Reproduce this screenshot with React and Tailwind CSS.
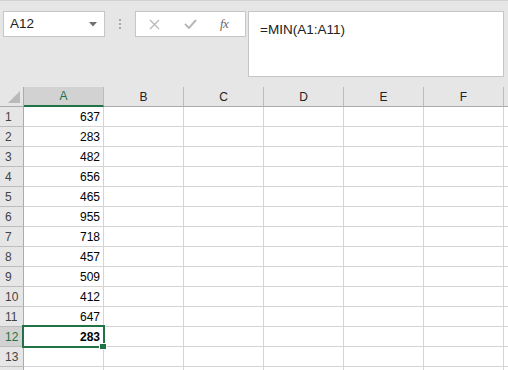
import React from 'react'

const VALUES = [637, 283, 482, 656, 465, 955, 718, 457, 509, 412, 647, 283]
const COLS = ['A', 'B', 'C', 'D', 'E', 'F']
const ROWS = Array.from({ length: 14 }, (_, i) => i + 1)

export default function App() {
    return (
        <div className="w-[508px] h-[370px] overflow-hidden bg-[#e6e6e6] font-['Liberation_Sans',Arial,sans-serif] select-none">
            {/* Formula bar strip */}
            <div className="border-t border-[#d2d2d2] pt-[10px] h-[87px]">
                <div className="flex items-start">
                    {/* Name box */}
                    <div className="ml-[3px] w-[102px] h-[26px] bg-white border border-[#c6c6c6] flex items-center justify-between pl-[6px] pr-[7px]">
                        <span className="text-[13.5px] text-[#222]">A12</span>
                        <svg width="8" height="5" viewBox="0 0 8 5"><path d="M0 0h8L4 4.5z" fill="#707070" /></svg>
                    </div>
                    {/* Dots */}
                    <div className="w-[30px] h-[26px] flex flex-col items-center justify-center gap-[2px]">
                        <span className="w-[2px] h-[2px] bg-[#a9a9a9]" />
                        <span className="w-[2px] h-[2px] bg-[#a9a9a9]" />
                        <span className="w-[2px] h-[2px] bg-[#a9a9a9]" />
                    </div>
                    {/* Cancel / enter / fx */}
                    <div className="w-[111px] h-[26px] bg-white border border-[#c6c6c6] flex items-center">
                        <svg className="ml-[13px]" width="11" height="11" viewBox="0 0 11 11">
                            <path d="M1 1l9 9M10 1l-9 9" stroke="#b8b8b8" strokeWidth="1.3" />
                        </svg>
                        <svg className="ml-[24px]" width="13" height="10" viewBox="0 0 13 10">
                            <path d="M1 5l4 4 7-8" stroke="#b8b8b8" strokeWidth="2" fill="none" />
                        </svg>
                        <span className="ml-[23px] text-[13px] italic text-[#6a6a6a] font-['Liberation_Serif',serif] tracking-[-0.5px]">fx</span>
                    </div>
                    {/* Formula input */}
                    <div className="ml-[2px] w-[256px] h-[66px] bg-white border border-[#c6c6c6] pl-[11px] pt-[5px]">
                        <span className="text-[13.5px] text-[#222]">=MIN(A1:A11)</span>
                    </div>
                </div>
            </div>

            {/* Sheet grid */}
            <div className="grid grid-cols-[24px_repeat(6,80px)_1fr] auto-rows-[20px]">
                {/* Corner */}
                <div className="bg-[#e6e6e6] border-r border-b border-[#ababab] flex items-end justify-end pr-[3px] pb-[3px]">
                    <svg width="12" height="12" viewBox="0 0 12 12"><path d="M12 0v12H0z" fill="#b9b9b9" /></svg>
                </div>
                {COLS.map((c) => (
                    <div
                        key={c}
                        className={
                            c === 'A'
                                ? 'bg-[#d2d2d2] border-r border-[#bcbcbc] border-b-2 border-b-[#217346] flex items-center justify-center text-[12px] text-[#217346]'
                                : 'bg-[#e6e6e6] border-r border-[#bcbcbc] border-b border-b-[#ababab] flex items-center justify-center text-[12px] text-[#222]'
                        }
                    >
                        {c}
                    </div>
                ))}
                <div className="bg-[#e6e6e6] border-l border-[#bcbcbc] border-b border-b-[#ababab] -ml-px" />

                {ROWS.map((r) => (
                    <React.Fragment key={r}>
                        <div
                            className={
                                r === 12
                                    ? 'bg-[#d2d2d2] border-r-2 border-[#217346] border-b border-b-[#bcbcbc] flex items-center pl-[5px] text-[12px] text-[#217346]'
                                    : 'bg-[#e6e6e6] border-r border-[#ababab] border-b border-b-[#bcbcbc] flex items-center pl-[5px] text-[12px] text-[#444]'
                            }
                        >
                            {r < 14 ? r : ''}
                        </div>
                        {COLS.map((c) => (
                            <div key={c} className="relative bg-white border-r border-b border-[#d4d4d4] flex items-center justify-end pr-[3px] text-[12px] text-black">
                                {c === 'A' && VALUES[r - 1] !== undefined && (
                                    <span className={r === 12 ? 'font-bold' : ''}>{VALUES[r - 1]}</span>
                                )}
                                {c === 'A' && r === 12 && (
                                    <>
                                        <div className="absolute z-10 -left-[2px] -top-[2px] w-[83px] h-[23px] border-2 border-[#217346] pointer-events-none" />
                                        <div className="absolute z-20 left-[75px] top-[16px] w-[8px] h-[7px] bg-[#217346] border border-white" />
                                    </>
                                )}
                            </div>
                        ))}
                        <div className="bg-white border-b border-[#d4d4d4]" />
                    </React.Fragment>
                ))}
            </div>
        </div>
    )
}
